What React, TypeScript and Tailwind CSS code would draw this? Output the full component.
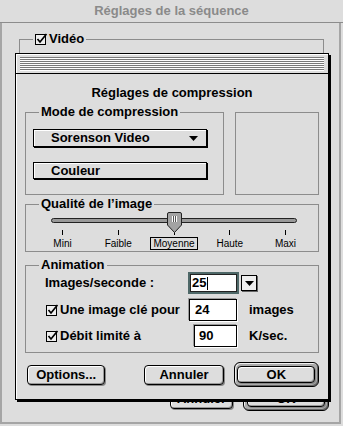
import type { ReactNode } from "react";

function CheckBox() {
  return (
    <svg width="13" height="12" viewBox="0 0 13 12" className="shrink-0">
      <rect x="0.5" y="1.5" width="10" height="10" fill="#eeeeee" stroke="#000" />
      <path d="M2.5 6 L5 9 L11.5 1" fill="none" stroke="#000" strokeWidth="1.7" />
    </svg>
  );
}

function Tri() {
  return (
    <svg width="9" height="5" viewBox="0 0 9 5">
      <path d="M0 0H9L4.5 5Z" fill="#000" />
    </svg>
  );
}

function Btn({ children, className = "" }: { children: ReactNode; className?: string }) {
  return (
    <div
      className={`flex items-center justify-center rounded-[4px] border border-black bg-[#dddddd] text-[13px] font-bold leading-none shadow-[inset_1px_1px_0_#fff,inset_-1px_-1px_0_#999,1px_1px_0_#888] ${className}`}
    >
      {children}
    </div>
  );
}

function DefaultBtn({ children, className = "" }: { children: ReactNode; className?: string }) {
  return (
    <div
      className={`flex h-[25px] w-[86px] items-center justify-center rounded-[6px] border border-black bg-[#aaaaaa] shadow-[inset_1px_1px_0_#eee,inset_-1px_-1px_0_#666] ${className}`}
    >
      <Btn className="h-[17px] w-[78px]">{children}</Btn>
    </div>
  );
}

function Group({ label, className = "", children }: { label: ReactNode; className?: string; children?: ReactNode }) {
  return (
    <fieldset className={`border border-[#8c8c8c] ${className}`}>
      <legend className="ml-[13px] px-[2px] text-[13px] font-bold leading-[14px]">{label}</legend>
      {children}
    </fieldset>
  );
}

const ticks = ["Mini", "Faible", "Moyenne", "Haute", "Maxi"];

function Slider() {
  return (
    <div className="ml-[25px] w-[246px]">
      <div className="relative mt-[7px] h-[5px] rounded-full border border-[#222] bg-[#999]">
        <svg width="15" height="21" viewBox="0 0 15 21" className="absolute left-[115px] top-[-7px]">
          <path
            d="M2 0.5 H13 Q14.5 0.5 14.5 2 V13 L7.5 20.5 L0.5 13 V2 Q0.5 0.5 2 0.5Z"
            fill="#a3a3a3"
            stroke="#222"
          />
          <path d="M5.5 4 V10 M7.5 4 V10 M9.5 4 V10" stroke="#fff" strokeWidth="1" />
          <path d="M6.5 4 V10 M8.5 4 V10" stroke="#555" strokeWidth="1" />
        </svg>
      </div>
      <div className="mt-[7px] flex justify-between px-[11px]">
        {ticks.map((t) => (
          <div key={t} className="flex w-px flex-col items-center">
            <div className="h-[5px] w-px bg-black" />
            <div
              className={`mt-[2px] whitespace-nowrap border px-[2px] text-[10px] leading-[11px] ${
                t === "Moyenne" ? "border-black" : "border-transparent"
              }`}
            >
              {t}
            </div>
          </div>
        ))}
      </div>
    </div>
  );
}

function Field({ value, className = "" }: { value: string; className?: string }) {
  return (
    <div
      className={`flex h-[22px] items-center border border-black bg-white text-[13px] font-bold shadow-[-1px_-1px_0_#999,1px_1px_0_#fff] ${className}`}
    >
      {value}
    </div>
  );
}

export default function App() {
  return (
    <div className="relative h-[426px] w-[343px] overflow-hidden bg-[#dddddd] font-['Liberation_Sans',Arial,sans-serif] text-black">
      <div className="flex h-[23px] items-center justify-center border-b border-[#8c8c8c] text-[13px] font-bold text-[#8a8a8a]">
        Réglages de la séquence
      </div>
      <div className="flex h-[401px] w-[341px] flex-col border-x-2 border-b-2 border-[#a5a5a5] pl-[17px] pr-[10px] pt-[8px]">
        <Group
          className="h-[330px] w-[305px]"
          label={
            <span className="flex items-center gap-[1px] leading-[16px]">
              <CheckBox />
              Vidéo
            </span>
          }
        />
        <div className="mb-[11px] mt-auto flex items-center justify-end">
          <Btn className="h-[20px] w-[63px]">Annuler</Btn>
          <DefaultBtn className="ml-[10px] w-[64px]">OK</DefaultBtn>
        </div>
      </div>

      <div className="absolute left-[15px] top-[53px] flex h-[347px] w-[314px] flex-col border border-black bg-[#dddddd] shadow-[2px_2px_0_#000,inset_1px_1px_0_#fff]">
        <div className="h-[20px] border-b border-black px-[4px] pt-[3px]">
          <div className="h-[14px] bg-[repeating-linear-gradient(to_bottom,#7a7a7a_0px,#7a7a7a_1px,#ffffff_1px,#ffffff_2px)]" />
        </div>
        <div className="px-[9px] pt-[11px]">
          <div className="text-center text-[13px] font-bold leading-[16px]">Réglages de compression</div>

          <div className="mt-[4px] flex items-start">
            <Group label="Mode de compression" className="h-[90px] w-[199px]">
              <div className="ml-[7px] mt-[10px] flex h-[18px] w-[174px] items-center justify-between border border-black bg-[#dddddd] pl-[17px] pr-[8px] text-[13px] font-bold shadow-[1px_1px_0_#000,inset_1px_1px_0_#fff]">
                Sorenson Video
                <Tri />
              </div>
              <div className="ml-[7px] mt-[15px] flex h-[17px] w-[174px] items-center border border-black bg-[#dddddd] pl-[17px] text-[13px] font-bold shadow-[1px_1px_0_#000,inset_1px_1px_0_#fff]">
                Couleur
              </div>
            </Group>
            <div className="ml-[11px] mt-[7px] h-[83px] w-[84px] border border-[#8c8c8c]" />
          </div>

          <Group label="Qualité de l’image" className="mt-[2px] h-[55px] w-[294px]">
            <Slider />
          </Group>

          <Group label="Animation" className="mt-[6px] h-[95px] w-[294px]">
            <div className="flex h-[22px] items-center">
              <span className="ml-[19px] w-[143px] text-[13px] font-bold">Images/seconde :</span>
              <div className="flex h-[22px] w-[51px] items-center border-2 border-[#4e6868] bg-white pl-[2px] text-[13px] font-bold shadow-[inset_0_0_0_1px_#222]">
                25
                <span className="ml-px h-[13px] w-px bg-black" />
              </div>
              <div className="ml-[2px] flex h-[16px] w-[16px] items-center justify-center border border-black bg-[#eeeeee] shadow-[1px_1px_0_#666]">
                <Tri />
              </div>
            </div>
            <div className="mt-[5px] flex items-center">
              <span className="ml-[20px] flex w-[143px] items-center gap-[1px] text-[13px] font-bold">
                <CheckBox />
                Une image clé pour
              </span>
              <Field value="24" className="w-[48px] pl-[5px]" />
              <span className="ml-[12px] text-[13px] font-bold">images</span>
            </div>
            <div className="mt-[4px] flex items-center">
              <span className="ml-[20px] flex w-[148px] items-center gap-[1px] text-[13px] font-bold">
                <CheckBox />
                Débit limité à
              </span>
              <Field value="90" className="w-[43px] pl-[4px]" />
              <span className="ml-[12px] text-[13px] font-bold">K/sec.</span>
            </div>
          </Group>

          <div className="mt-[9px] flex items-center">
            <Btn className="ml-[2px] h-[20px] w-[79px]">Options...</Btn>
            <Btn className="ml-[39px] h-[20px] w-[80px]">Annuler</Btn>
            <DefaultBtn className="ml-[10px]">OK</DefaultBtn>
          </div>
        </div>
      </div>
    </div>
  );
}
